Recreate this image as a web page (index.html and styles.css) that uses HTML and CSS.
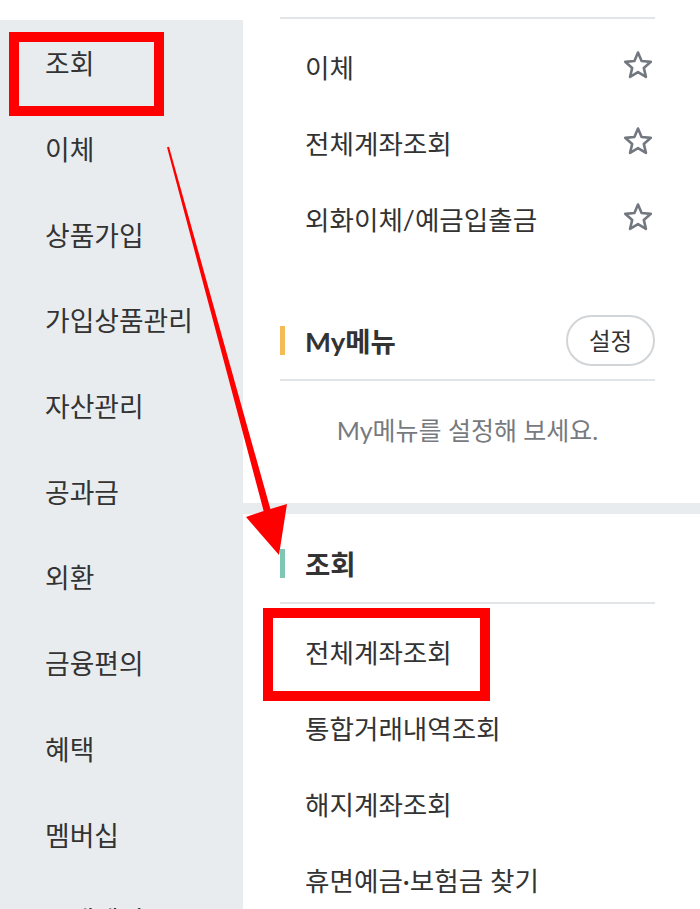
FILE: index.html
```html
<!DOCTYPE html>
<html lang="ko">
<head>
<meta charset="utf-8">
<title>전체메뉴</title>
<link rel="stylesheet" href="styles.css">
</head>
<body>
<div class="page">
  <nav class="side">
    <div class="side-item">조회</div>
    <div class="side-item">이체</div>
    <div class="side-item">상품가입</div>
    <div class="side-item">가입상품관리</div>
    <div class="side-item">자산관리</div>
    <div class="side-item">공과금</div>
    <div class="side-item">외환</div>
    <div class="side-item">금융편의</div>
    <div class="side-item">혜택</div>
    <div class="side-item">멤버십</div>
    <div class="side-item">고객센터</div>
  </nav>
  <main class="main">
    <section class="sec">
      <ul class="list">
        <li class="item"><span>이체</span><svg class="star" viewBox="0 0 30 29" width="30" height="29"><path d="M15 2.5L18.59 11.07L27.84 11.83L20.8 17.89L22.94 26.92L15 22.1L7.06 26.92L9.2 17.89L2.16 11.83L11.41 11.07Z"/></svg></li>
        <li class="item"><span>전체계좌조회</span><svg class="star" viewBox="0 0 30 29" width="30" height="29"><path d="M15 2.5L18.59 11.07L27.84 11.83L20.8 17.89L22.94 26.92L15 22.1L7.06 26.92L9.2 17.89L2.16 11.83L11.41 11.07Z"/></svg></li>
        <li class="item"><span>외화이체/예금입출금</span><svg class="star" viewBox="0 0 30 29" width="30" height="29"><path d="M15 2.5L18.59 11.07L27.84 11.83L20.8 17.89L22.94 26.92L15 22.1L7.06 26.92L9.2 17.89L2.16 11.83L11.41 11.07Z"/></svg></li>
      </ul>
      <div class="head head-my">
        <div class="head-title"><i class="bar bar-orange"></i><span>My메뉴</span></div>
        <button class="btn">설정</button>
      </div>
      <p class="empty">My메뉴를 설정해 보세요.</p>
    </section>
    <div class="band"></div>
    <section class="sec">
      <div class="head head-inq">
        <div class="head-title"><i class="bar bar-teal"></i><span>조회</span></div>
      </div>
      <ul class="list list-plain">
        <li class="item"><span>전체계좌조회</span></li>
        <li class="item"><span>통합거래내역조회</span></li>
        <li class="item"><span>해지계좌조회</span></li>
        <li class="item"><span>휴면예금·보험금 찾기</span></li>
      </ul>
    </section>
  </main>
</div>
<div class="mark mark-1"></div>
<div class="mark mark-2"></div>
<svg class="arrow" viewBox="0 0 700 909" width="700" height="909">
  <polygon points="169,146.7 270.4,509.1 287,504 279,555 246,517 263.6,510.9 167,147.3"/>
</svg>
</body>
</html>
```

FILE: styles.css
```css
html, body {
  margin: 0;
  padding: 0;
  background: #ffffff;
}
body {
  font-family: Lato, "Noto Sans CJK KR", sans-serif;
  color: #333333;
  width: 700px;
  height: 909px;
  overflow: hidden;
  position: relative;
}
.page {
  display: flex;
  align-items: stretch;
  height: 909px;
  overflow: hidden;
}
.side {
  width: 243px;
  flex: 0 0 243px;
  margin-top: 20px;
  background: #e9ecef;
  display: flex;
  flex-direction: column;
  overflow: hidden;
}
.side-item {
  height: 85.7px;
  flex: 0 0 85.7px;
  display: flex;
  align-items: center;
  padding-left: 45px;
  font-size: 26.8px;
  color: #333333;
}
.main {
  flex: 1;
  display: flex;
  flex-direction: column;
  overflow: hidden;
}
.main > * {
  flex-shrink: 0;
}
.sec {
  padding: 0 45px 0 37px;
}
.sec:first-child {
  padding-top: 17px;
}
.list {
  list-style: none;
  margin: 0;
  padding: 9px 0 0;
  border-top: 2px solid #e2e5e8;
}
.list-plain {
  border-top: none;
}
.item {
  height: 76px;
  display: flex;
  align-items: center;
  justify-content: space-between;
  padding: 0 2px 0 25px;
  font-size: 26.6px;
  color: #333333;
}
.star {
  display: block;
  margin-top: -3px;
}
.star path {
  fill: none;
  stroke: #737880;
  stroke-width: 2.6;
  stroke-linejoin: round;
}
.head {
  height: 78px;
  display: flex;
  align-items: center;
  justify-content: space-between;
  border-bottom: 2px solid #e2e5e8;
}
.head-my {
  margin-top: 45px;
}
.head-inq {
  margin-top: 10px;
}
.head-title {
  display: flex;
  align-items: center;
  gap: 20px;
  font-size: 27.5px;
  font-weight: 700;
  color: #333333;
}
.bar {
  display: block;
  width: 5px;
  height: 29px;
}
.bar-orange {
  background: #f4bb56;
}
.bar-teal {
  background: #7fc6b5;
}
.btn {
  font-family: Lato, "Noto Sans CJK KR", sans-serif;
  font-size: 23.5px;
  color: #333333;
  background: #ffffff;
  border: 2px solid #d2d5d8;
  border-radius: 26px;
  width: 89px;
  height: 51px;
  padding: 0;
  display: flex;
  align-items: center;
  justify-content: center;
}
.empty {
  margin: 0;
  padding: 34px 0 58px;
  line-height: 30px;
  font-size: 25px;
  text-align: center;
  color: #777a7e;
}
.band {
  height: 11px;
  background: #e9ecef;
}
.mark {
  position: absolute;
  box-sizing: border-box;
  border: 10px solid #ff0000;
}
.mark-1 {
  left: 9px;
  top: 32px;
  width: 155px;
  height: 84px;
}
.mark-2 {
  left: 263px;
  top: 608px;
  width: 227px;
  height: 93px;
}
.arrow {
  position: absolute;
  left: 0;
  top: 0;
  pointer-events: none;
}
.arrow polygon {
  fill: #ff0000;
}
```
